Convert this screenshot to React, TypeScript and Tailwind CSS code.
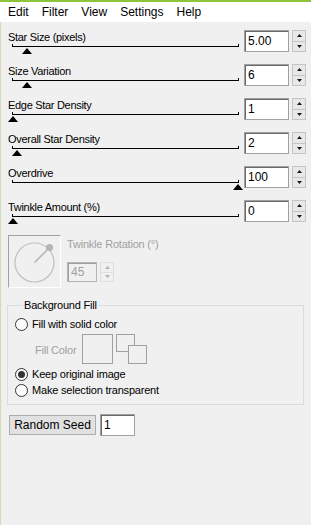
import React from 'react'

const font = { fontFamily: '"Liberation Sans", Arial, sans-serif' }

interface SliderRowProps {
  label: string
  value: string
  thumb: number
}

function Spinner({ h = 'h-[22px]' }: { h?: string }) {
  return (
    <div className={`ml-[3px] flex w-[14px] flex-col ${h}`}>
      <div className="flex flex-1 items-center justify-center border border-[#c4c4c4] bg-[#e8e8e8]">
        <svg width="5" height="3" viewBox="0 0 5 3">
          <polygon points="2.5,0 5,3 0,3" fill="#1a1a1a" />
        </svg>
      </div>
      <div className="flex flex-1 items-center justify-center border border-t-0 border-[#c4c4c4] bg-[#e8e8e8]">
        <svg width="5" height="3" viewBox="0 0 5 3">
          <polygon points="0,0 5,0 2.5,3" fill="#1a1a1a" />
        </svg>
      </div>
    </div>
  )
}

function SliderRow({ label, value, thumb }: SliderRowProps) {
  return (
    <div className="flex h-[34px] pl-[8px]">
      <div className="w-[236px]">
        <div className="mt-px h-[13px] text-[11px] leading-[13px] tracking-[-0.3px] text-black">{label}</div>
        <div className="relative ml-[4px] h-[3px] w-[227px] border-x border-b border-black">
          <svg className="absolute top-[4px]" style={{ left: thumb - 18 }} width="10" height="6" viewBox="0 0 10 6">
            <polygon points="5,0 10,6 0,6" fill="#000" />
          </svg>
        </div>
      </div>
      <div className="flex h-[22px] w-[45px] items-center border border-[#a0a0a0] bg-white pl-[3px] text-[12px] shadow-[inset_1px_1px_#696969]">
        {value}
      </div>
      <Spinner />
    </div>
  )
}

function Radio({ label, checked }: { label: string; checked?: boolean }) {
  return (
    <div className="flex h-[16px] items-center">
      <div className="flex h-[13px] w-[13px] items-center justify-center rounded-full border border-[#333] bg-white">
        {checked && <div className="h-[7px] w-[7px] rounded-full bg-[#333]" />}
      </div>
      <span className="ml-[4px] text-[11px] tracking-[-0.2px] text-black">{label}</span>
    </div>
  )
}

export default function App() {
  const rows: SliderRowProps[] = [
    { label: 'Star Size (pixels)', value: '5.00', thumb: 27 },
    { label: 'Size Variation', value: '6', thumb: 27 },
    { label: 'Edge Star Density', value: '1', thumb: 13 },
    { label: 'Overall Star Density', value: '2', thumb: 17 },
    { label: 'Overdrive', value: '100', thumb: 238 },
    { label: 'Twinkle Amount (%)', value: '0', thumb: 13 },
  ]

  return (
    <div className="flex h-[525px] w-[311px] flex-col overflow-hidden bg-[#f0f0f0]" style={font}>
      <div className="h-[2px] bg-[#8cc43c]" />
      <div className="flex h-[20px] items-center gap-[13px] bg-white pl-[8px] text-[12px] text-black">
        <span>Edit</span>
        <span>Filter</span>
        <span>View</span>
        <span>Settings</span>
        <span>Help</span>
      </div>

      <div className="flex flex-1 flex-col pt-[8px] shadow-[inset_1px_0_#d3dac0,inset_2px_0_#eceee2]">
        {rows.map((r) => (
          <SliderRow key={r.label} {...r} />
        ))}

        {/* twinkle rotation dial */}
        <div className="mt-px flex pl-[8px]">
          <div className="h-[53px] w-[53px] border border-[#a0a0a0] border-b-white border-r-white">
            <svg width="51" height="51" viewBox="0 0 51 51">
              <circle cx="25.5" cy="26.5" r="19.5" fill="none" stroke="#c0c0c0" strokeWidth="1.2" />
              <line x1="25.5" y1="26.5" x2="40" y2="12" stroke="#b4b4b4" strokeWidth="1.5" />
              <circle cx="40.5" cy="11.5" r="3.5" fill="#b4b4b4" />
            </svg>
          </div>
          <div className="ml-[6px] flex flex-col">
            <div className="mt-[3px] h-[13px] text-[11px] leading-[13px] tracking-[-0.2px] text-[#a0a0a0]">Twinkle Rotation (°)</div>
            <div className="mt-[11px] flex">
              <div className="flex h-[20px] w-[30px] items-center border border-[#b4b4b4] bg-[#f0f0f0] pl-[3px] text-[12px] text-[#a0a0a0] shadow-[inset_1px_1px_#a0a0a0]">
                45
              </div>
              <div className="ml-[3px] flex h-[20px] w-[14px] flex-col opacity-50">
                <div className="flex flex-1 items-center justify-center border border-[#d0d0d0]">
                  <svg width="5" height="3" viewBox="0 0 5 3">
                    <polygon points="2.5,0 5,3 0,3" fill="#777" />
                  </svg>
                </div>
                <div className="flex flex-1 items-center justify-center border border-t-0 border-[#d0d0d0]">
                  <svg width="5" height="3" viewBox="0 0 5 3">
                    <polygon points="0,0 5,0 2.5,3" fill="#777" />
                  </svg>
                </div>
              </div>
            </div>
          </div>
        </div>

        {/* background fill group */}
        <fieldset className="mx-[7px] mt-[11px] h-[106px] border border-[#dcdcdc] pl-[7px]">
          <legend className="ml-[8px] px-px text-[11px] leading-[13px] tracking-[-0.2px] text-black">Background Fill</legend>
          <div className="mt-[4px]">
            <Radio label="Fill with solid color" />
          </div>
          <div className="mt-[2px] flex items-start pl-[20px]">
            <span className="mt-[8px] text-[11px] tracking-[-0.2px] text-[#a0a0a0]">Fill Color</span>
            <div className="ml-[6px] h-[30px] w-[31px] border border-[#a0a0a0]" />
            <div className="relative ml-[3px] h-[30px] w-[31px]">
              <div className="h-[18px] w-[19px] border border-[#a0a0a0]" />
              <div className="absolute left-[12px] top-[11px] h-[19px] w-[19px] border border-[#a0a0a0] bg-[#f0f0f0]" />
            </div>
          </div>
          <div className="mt-[2px]">
            <Radio label="Keep original image" checked />
          </div>
          <Radio label="Make selection transparent" />
        </fieldset>

        <div className="mt-[9px] flex items-center pl-[9px]">
          <button className="h-[20px] w-[87px] border border-[#adadad] bg-[#e1e1e1] text-[12px] text-black">Random Seed</button>
          <div className="ml-[4px] flex h-[22px] w-[35px] items-center border border-[#a0a0a0] bg-white pl-[3px] text-[12px] shadow-[inset_1px_1px_#696969]">
            1
          </div>
        </div>
      </div>
    </div>
  )
}
